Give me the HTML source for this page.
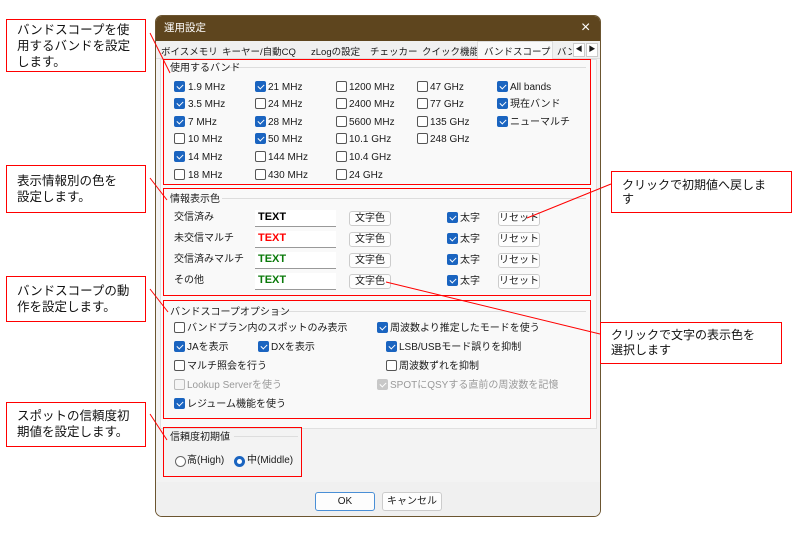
<!DOCTYPE html>
<html><head><meta charset="utf-8"><style>
*{margin:0;padding:0;box-sizing:border-box}
body{width:801px;height:537px;background:#fff;position:relative;overflow:hidden;font-family:"Liberation Sans","Noto Sans CJK JP",sans-serif;font-size:10px;line-height:13px;color:#1a1a1a}
.a{position:absolute;white-space:nowrap}
.dlg{position:absolute;left:155px;top:15px;width:446px;height:502px;border:1px solid #6b5530;border-radius:7px;background:#f3f3f3;overflow:hidden}
.tb{position:absolute;left:0;top:0;width:100%;height:25px;background:#5e451e;color:#fff;font-size:11px}
.cb{position:absolute;width:11px;height:11px;border:1px solid #555;border-radius:2px;background:#fff}
.cb.on{background:#1a64c0;border-color:#1a64c0}
.cb.on:after{content:"";position:absolute;left:3px;top:1px;width:3px;height:5px;border:solid #fff;border-width:0 1.3px 1.3px 0;transform:rotate(45deg)}
.cb.dis{border-color:#bbb;background:#f5f5f5}
.cb.don{background:#c8c8c8;border-color:#c8c8c8}
.cb.don:after{content:"";position:absolute;left:3px;top:1px;width:3px;height:5px;border:solid #fff;border-width:0 1.3px 1.3px 0;transform:rotate(45deg)}
.rb{position:absolute;border:1px solid red}
.ann{position:absolute;border:1px solid red;background:#fff;font-size:12.5px;line-height:16px;padding:2px 0 0 10px;color:#111;white-space:nowrap}
.btn{position:absolute;height:15px;border:1px solid #ccc;border-radius:3px;background:#fdfdfd;font-size:10px;text-align:center;line-height:13px;white-space:nowrap;overflow:hidden}
.inp{position:absolute;width:81px;height:17px;background:#fff;border-bottom:1px solid #999;font-weight:bold;font-size:11px;padding-left:3px;line-height:15px}
.gb{position:absolute;border-top:1px solid #ddd}
.tab{position:absolute;top:30px;font-size:9.5px;white-space:nowrap}
.g>.a{margin-top:1px}
</style></head><body>
<div class="dlg">
 <div class="tb"><span class="a" style="left:8px;top:6px;font-size:10.5px">運用設定</span><span class="a" style="left:425px;top:2px;font-size:16px;line-height:20px">×</span></div>
 <div class="a" style="left:0;top:25px;width:446px;height:18px;background:#f0f0f0;border-bottom:1px solid #ddd"></div>
 <div class="tab" style="left:5px">ボイスメモリ</div>
 <div class="tab" style="left:66px">キーヤー/自動CQ</div>
 <div class="tab" style="left:155px">zLogの設定</div>
 <div class="tab" style="left:214px">チェッカー</div>
 <div class="tab" style="left:266px">クイック機能</div>
 <div class="a" style="left:321px;top:25px;width:76px;height:19px;background:#f9f9f9;border:1px solid #ddd;border-bottom:none"></div>
 <div class="tab" style="left:328px">バンドスコープ</div>
 <div class="tab" style="left:401px;width:15px;overflow:hidden">バン</div>
 <div class="a" style="left:417px;top:27px;width:12px;height:14px;background:#fff;border:1px solid #ccc;font-size:7px;text-align:center;line-height:12px">◀</div>
 <div class="a" style="left:430px;top:27px;width:12px;height:14px;background:#fff;border:1px solid #ccc;font-size:7px;text-align:center;line-height:12px">▶</div>
 <div class="a" style="left:4px;top:43px;width:437px;height:370px;background:#f9f9f9;border:1px solid #e0e0e0"></div>
 <div class="a" style="left:0;top:466px;width:446px;height:36px;background:#f0f0f0"></div>
 <div class="btn" style="left:159px;top:476px;width:60px;height:19px;border-color:#4a8fd6;line-height:17px">OK</div>
 <div class="btn" style="left:226px;top:476px;width:60px;height:19px;line-height:17px">キャンセル</div>
</div>

<div class="g">
<div class="gb" style="left:226px;top:67px;width:360px"></div>
<div class="gb" style="left:222px;top:198px;width:364px"></div>
<div class="gb" style="left:275px;top:311px;width:311px"></div>
<div class="gb" style="left:234px;top:436px;width:64px"></div>
<div class="a" style="left:170px;top:61px">使用するバンド</div>
<div class="a" style="left:170px;top:192px">情報表示色</div>
<div class="a" style="left:170px;top:305px">バンドスコープオプション</div>
<div class="a" style="left:170px;top:430px">信頼度初期値</div>

<div class="cb on" style="left:174px;top:81px"></div><div class="a" style="left:188px;top:80px">1.9 MHz</div>
<div class="cb on" style="left:174px;top:98px"></div><div class="a" style="left:188px;top:97px">3.5 MHz</div>
<div class="cb on" style="left:174px;top:116px"></div><div class="a" style="left:188px;top:115px">7 MHz</div>
<div class="cb" style="left:174px;top:133px"></div><div class="a" style="left:188px;top:132px">10 MHz</div>
<div class="cb on" style="left:174px;top:151px"></div><div class="a" style="left:188px;top:150px">14 MHz</div>
<div class="cb" style="left:174px;top:169px"></div><div class="a" style="left:188px;top:168px">18 MHz</div>
<div class="cb on" style="left:255px;top:81px"></div><div class="a" style="left:268px;top:80px">21 MHz</div>
<div class="cb" style="left:255px;top:98px"></div><div class="a" style="left:268px;top:97px">24 MHz</div>
<div class="cb on" style="left:255px;top:116px"></div><div class="a" style="left:268px;top:115px">28 MHz</div>
<div class="cb on" style="left:255px;top:133px"></div><div class="a" style="left:268px;top:132px">50 MHz</div>
<div class="cb" style="left:255px;top:151px"></div><div class="a" style="left:268px;top:150px">144 MHz</div>
<div class="cb" style="left:255px;top:169px"></div><div class="a" style="left:268px;top:168px">430 MHz</div>
<div class="cb" style="left:336px;top:81px"></div><div class="a" style="left:349px;top:80px">1200 MHz</div>
<div class="cb" style="left:336px;top:98px"></div><div class="a" style="left:349px;top:97px">2400 MHz</div>
<div class="cb" style="left:336px;top:116px"></div><div class="a" style="left:349px;top:115px">5600 MHz</div>
<div class="cb" style="left:336px;top:133px"></div><div class="a" style="left:349px;top:132px">10.1 GHz</div>
<div class="cb" style="left:336px;top:151px"></div><div class="a" style="left:349px;top:150px">10.4 GHz</div>
<div class="cb" style="left:336px;top:169px"></div><div class="a" style="left:349px;top:168px">24 GHz</div>
<div class="cb" style="left:417px;top:81px"></div><div class="a" style="left:430px;top:80px">47 GHz</div>
<div class="cb" style="left:417px;top:98px"></div><div class="a" style="left:430px;top:97px">77 GHz</div>
<div class="cb" style="left:417px;top:116px"></div><div class="a" style="left:430px;top:115px">135 GHz</div>
<div class="cb" style="left:417px;top:133px"></div><div class="a" style="left:430px;top:132px">248 GHz</div>
<div class="cb on" style="left:497px;top:81px"></div><div class="a" style="left:510px;top:80px">All bands</div>
<div class="cb on" style="left:497px;top:98px"></div><div class="a" style="left:510px;top:97px">現在バンド</div>
<div class="cb on" style="left:497px;top:116px"></div><div class="a" style="left:510px;top:115px">ニューマルチ</div>

<div class="a" style="left:174px;top:210px">交信済み</div>
<div class="a" style="left:174px;top:231px">未交信マルチ</div>
<div class="a" style="left:174px;top:252px">交信済みマルチ</div>
<div class="a" style="left:174px;top:273px">その他</div>
<div class="inp" style="left:255px;top:210px;color:#000">TEXT</div>
<div class="inp" style="left:255px;top:231px;color:#f00">TEXT</div>
<div class="inp" style="left:255px;top:252px;color:#0a7a0a">TEXT</div>
<div class="inp" style="left:255px;top:273px;color:#0a7a0a">TEXT</div>
<div class="btn" style="left:349px;top:211px;width:42px">文字色</div>
<div class="btn" style="left:349px;top:232px;width:42px">文字色</div>
<div class="btn" style="left:349px;top:253px;width:42px">文字色</div>
<div class="btn" style="left:349px;top:274px;width:42px">文字色</div>
<div class="cb on" style="left:447px;top:212px"></div><div class="a" style="left:460px;top:211px">太字</div>
<div class="cb on" style="left:447px;top:233px"></div><div class="a" style="left:460px;top:232px">太字</div>
<div class="cb on" style="left:447px;top:254px"></div><div class="a" style="left:460px;top:253px">太字</div>
<div class="cb on" style="left:447px;top:275px"></div><div class="a" style="left:460px;top:274px">太字</div>
<div class="btn" style="left:498px;top:211px;width:42px">リセット</div>
<div class="btn" style="left:498px;top:232px;width:42px">リセット</div>
<div class="btn" style="left:498px;top:253px;width:42px">リセット</div>
<div class="btn" style="left:498px;top:274px;width:42px">リセット</div>

<div class="cb" style="left:174px;top:322px"></div><div class="a" style="left:187px;top:321px">バンドプラン内のスポットのみ表示</div>
<div class="cb on" style="left:377px;top:322px"></div><div class="a" style="left:390px;top:321px">周波数より推定したモードを使う</div>
<div class="cb on" style="left:174px;top:341px"></div><div class="a" style="left:187px;top:340px">JAを表示</div>
<div class="cb on" style="left:258px;top:341px"></div><div class="a" style="left:271px;top:340px">DXを表示</div>
<div class="cb on" style="left:386px;top:341px"></div><div class="a" style="left:399px;top:340px">LSB/USBモード誤りを抑制</div>
<div class="cb" style="left:174px;top:360px"></div><div class="a" style="left:187px;top:359px">マルチ照会を行う</div>
<div class="cb" style="left:386px;top:360px"></div><div class="a" style="left:399px;top:359px">周波数ずれを抑制</div>
<div class="cb dis" style="left:174px;top:379px"></div><div class="a" style="left:187px;top:378px;color:#999">Lookup Serverを使う</div>
<div class="cb don" style="left:377px;top:379px"></div><div class="a" style="left:390px;top:378px;color:#999">SPOTにQSYする直前の周波数を記憶</div>
<div class="cb on" style="left:174px;top:398px"></div><div class="a" style="left:187px;top:397px">レジューム機能を使う</div>

<div class="a" style="left:175px;top:455px;width:11px;height:11px;border:1px solid #666;border-radius:50%;background:#fff"></div>
<div class="a" style="left:187px;top:453px">高(High)</div>
<div class="a" style="left:234px;top:455px;width:11px;height:11px;border-radius:50%;background:#1a64c0"><div class="a" style="left:3px;top:3px;width:5px;height:5px;border-radius:50%;background:#fff;margin:0"></div></div>
<div class="a" style="left:247px;top:453px">中(Middle)</div>
</div>

<div class="rb" style="left:163px;top:59px;width:428px;height:126px"></div>
<div class="rb" style="left:163px;top:188px;width:428px;height:108px"></div>
<div class="rb" style="left:163px;top:300px;width:428px;height:119px"></div>
<div class="rb" style="left:163px;top:427px;width:139px;height:50px"></div>

<div class="ann" style="left:6px;top:19px;width:140px;height:53px">バンドスコープを使<br>用するバンドを設定<br>します。</div>
<div class="ann" style="left:6px;top:165px;width:140px;height:48px;padding-top:7px">表示情報別の色を<br>設定します。</div>
<div class="ann" style="left:6px;top:276px;width:140px;height:46px;padding-top:6px">バンドスコープの動<br>作を設定します。</div>
<div class="ann" style="left:6px;top:402px;width:140px;height:45px;padding-top:5px">スポットの信頼度初<br>期値を設定します。</div>
<div class="ann" style="left:611px;top:171px;width:181px;height:42px;font-size:12px;line-height:14px;padding-top:6px">クリックで初期値へ戻しま<br>す</div>
<div class="ann" style="left:600px;top:322px;width:182px;height:42px;font-size:12px;line-height:15px;padding-top:5px">クリックで文字の表示色を<br>選択します</div>

<svg class="a" style="left:0;top:0" width="801" height="537"><g stroke="red" stroke-width="1" fill="none">
<line x1="150" y1="33" x2="170" y2="73"/>
<line x1="150" y1="178" x2="167" y2="200"/>
<line x1="150" y1="289" x2="168" y2="312"/>
<line x1="150" y1="414" x2="167" y2="440"/>
<line x1="527" y1="218" x2="611" y2="184"/>
<line x1="386" y1="282" x2="600" y2="334"/>
</g></svg>
</body></html>
